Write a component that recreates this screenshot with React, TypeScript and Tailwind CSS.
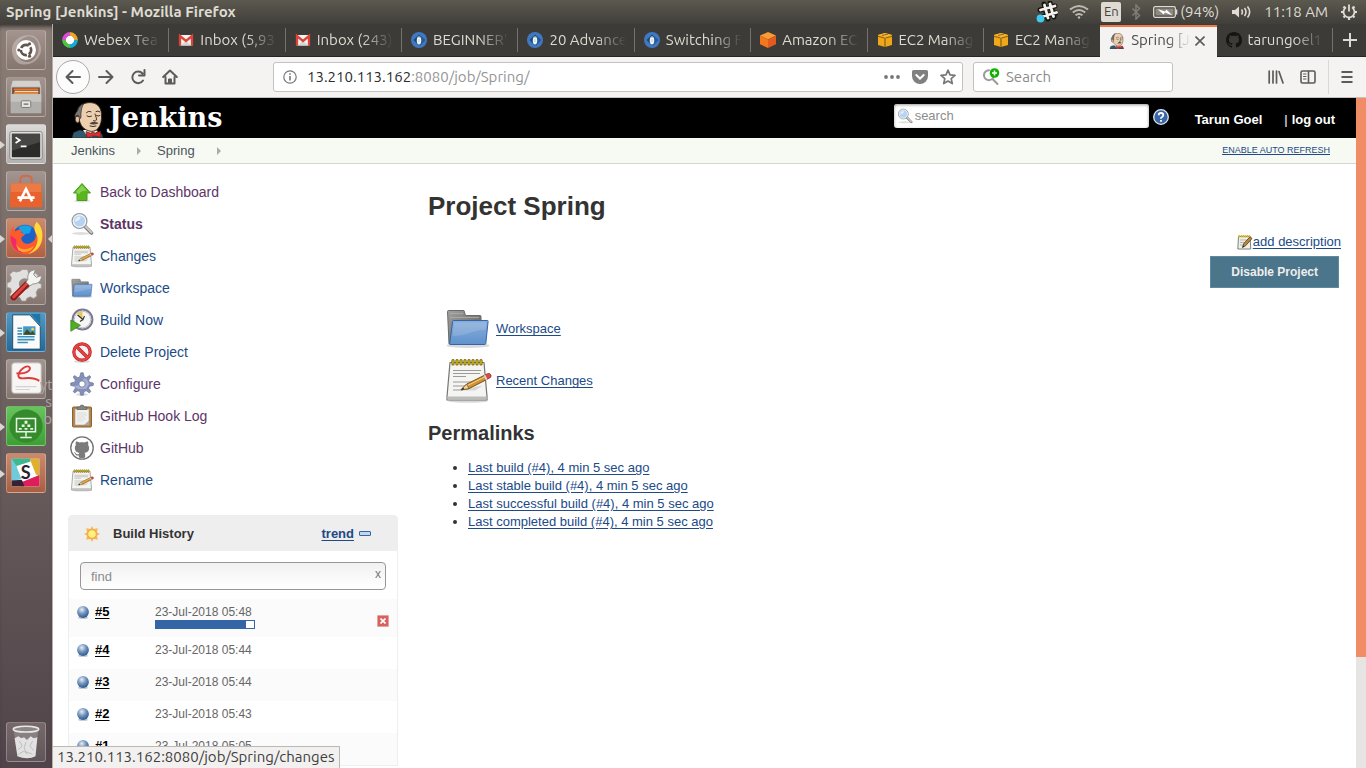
import type { ReactNode } from "react";

const UBUNTU = "font-['Ubuntu','Noto_Sans',sans-serif]";
const HELVETICA = "font-['Liberation_Sans',Arial,sans-serif]";

type SizeProps = { className?: string };

/* ---------- shared drawings ---------- */

function Butler({ className }: SizeProps) {
  return (
    <svg viewBox="0 0 34 36" className={className} aria-hidden="true">
      <path d="M1 36l1.500-5.500L9 28l7 2 10-1 5 3 1 4z" fill="#335a6c" stroke="#16262f" strokeWidth=".6" />
      <path d="M12 28l5 7h3l7-6-3-1z" fill="#f4f4f4" />
      <path d="M6 10C7 4 12 .8 18.500.6 26 .5 30 5 30.500 12c.4 6-.5 11-3.500 14.500-2 2.500-6 3.500-9 2.500-4.500-1.400-7.500-4-9-8.500z" fill="#eccfae" stroke="#33261d" strokeWidth=".9" />
      <path d="M6.500 9C7.500 5 10 2.500 13 1.500 10.500 4.500 10.500 8 10 11c-.2 2 .5 3.500-.5 5.500l-1.500-2.500C6 12.500 4.500 14 4.200 16 3 13.500 4.500 10.500 6.500 9z" fill="#7a7674" stroke="#221c19" strokeWidth=".6" />
      <path d="M4.500 15.500c1.200-2 3.800-1.400 4 1.300.2 2.200-.8 4.200-2 4-1.800-.3-2.800-3.300-2-5.300z" fill="#e3bf9b" stroke="#33261d" strokeWidth=".8" />
      <path d="M15.500 10.500q2-2 4.500-.8M25 9.500q2-1.200 3.800.3M16 14q2 1.600 4.500.2M25.500 13.500q1.800 1.200 3.500 0M24 12c.5 2.500 2.200 4.500 1.200 6.300-.7 1-2 .8-2.700.3M19 24q3 1.200 6 0" fill="none" stroke="#2a1e17" strokeWidth=".9" strokeLinecap="round" />
      <path d="M18.500 21.500c2-1.500 4-2.300 5.500-1.500 1 .3 2 0 3.500 1-1.200 1.700-6.500 2-9 .5z" fill="#4e433d" />
      <path d="M15 29.500l5.500 2v-1.200l2.800-.1.300 1.200 5.900-2.400.5 6.500-5.800-1.500-3.500.2-4.700 1.800z" fill="#d9302f" stroke="#5b100e" strokeWidth=".6" />
    </svg>
  );
}

function Notepad({ className }: SizeProps) {
  return (
    <svg viewBox="0 0 48 48" className={className} aria-hidden="true">
      <ellipse cx="24" cy="45" rx="20" ry="1.800" fill="#000" opacity=".15" />
      <path d="M6 6.500h34l3 34v3.500H3v-3.500z" fill="#f4f4f2" stroke="#747672" strokeWidth="1.200" strokeLinejoin="round" />
      <path d="M3.500 40.500h39v3h-39z" fill="#bcbdb9" />
      <path d="M9 14.500h28M9 17.500h27M9 20.500h13M9 26h24M9 30h16M9 34h10" stroke="#9a9c98" strokeWidth="1" />
      <path d="M9 4.500v3.500M13 4.500v3.500M17 4.500v3.500M21 4.500v3.500M25 4.500v3.500M29 4.500v3.500M33 4.500v3.500M37 4.500v3.500" stroke="#7b6500" strokeWidth="3.200" strokeLinecap="round" />
      <path d="M9 4.500v3.500M13 4.500v3.500M17 4.500v3.500M21 4.500v3.500M25 4.500v3.500M29 4.500v3.500M33 4.500v3.500M37 4.500v3.500" stroke="#e2cd33" strokeWidth="1.200" strokeLinecap="round" />
      <path d="M17 34.500h14l8-5-6 1z" fill="#000" opacity=".12" />
      <path d="M17 33.800l5.500-5.600L40 19.500l2.200 4.300L25 32.600z" fill="#cf9238" stroke="#7b4e0c" strokeWidth="1" strokeLinejoin="round" />
      <path d="M23.500 29.500L40.500 21" stroke="#efc978" strokeWidth="1.200" />
      <path d="M17 33.800l5.500-5.600 2.500 4.400z" fill="#ecd8ad" stroke="#7b4e0c" strokeWidth=".7" />
      <path d="M17 33.800l2.200-2.300 1 1.800z" fill="#222" />
      <path d="M41 18.900l2.500-1.200c2-.6 3 .2 3.400 1.300.4 1.400 0 2.400-1.200 3l-2.500 1.300z" fill="#dd4a45" stroke="#8c1815" strokeWidth=".7" />
      <path d="M39.500 19.700l1.800-.9 2.200 4.400-1.800.9z" fill="#d5d7d2" />
    </svg>
  );
}

function EditNote({ className }: SizeProps) {
  return (
    <svg viewBox="0 0 16 16" className={className} aria-hidden="true">
      <path d="M1.500 2.500h11.500l.8 12.500H.8z" fill="#efefed" stroke="#80827e" />
      <path d="M3 6h7M3 8.500h5M3 11h3" stroke="#b3b4b1" />
      <path d="M1.500 2.300h11.500" stroke="#d8bc22" strokeWidth="2.600" strokeDasharray="1.500 .6" />
      <path d="M5.500 13.500l1.200-3.800L13 2.800l2 1.700-6.200 7z" fill="#b98a3e" stroke="#54390f" strokeWidth=".8" strokeLinejoin="round" />
      <path d="M5.500 13.500l.6-1.900 1.200 1z" fill="#222" />
    </svg>
  );
}

function Folder({ className }: SizeProps) {
  return (
    <svg viewBox="0 0 48 48" className={className} aria-hidden="true">
      <defs>
        <linearGradient id="folder-back" x1="0" x2="1" y1="0" y2="1">
          <stop offset="0" stopColor="#a2a2a0" />
          <stop offset="1" stopColor="#555753" />
        </linearGradient>
        <linearGradient id="folder-front" x1="0" x2="0" y1="0" y2="1">
          <stop offset="0" stopColor="#8aaedb" />
          <stop offset="1" stopColor="#5f92cd" />
        </linearGradient>
      </defs>
      <ellipse cx="24" cy="41.500" rx="21.500" ry="2.500" fill="#000" opacity=".15" />
      <path d="M3.500 7.500Q3.500 6.500 4.500 6.500H20l1.500 5H36q1 0 1 1V40H5z" fill="url(#folder-back)" stroke="#6b6d6a" />
      <path d="M6 9.500h13M6 13.500h29" stroke="#aeaeac" strokeWidth=".8" />
      <path d="M9.500 16.500h34q.8 0 .6.900L41.800 39.500q-.1 1-1.100 1H6.500q-1 0-.8-1L8.600 17.400q.1-.9.900-.9z" fill="url(#folder-front)" stroke="#3465a4" />
      <path d="M10 18.500h32.500L41.500 26C30 25 23 32 8.500 32z" fill="#fff" opacity=".14" />
    </svg>
  );
}

function Magnifier({ className }: SizeProps) {
  return (
    <svg viewBox="0 0 24 24" className={className} aria-hidden="true">
      <ellipse cx="11" cy="21.500" rx="9" ry="1.500" fill="#000" opacity=".13" />
      <path d="M15 14.500l6.500 6.500" stroke="#7b7d7a" strokeWidth="3.600" strokeLinecap="round" />
      <path d="M15.500 14.500l6 6" stroke="#c9cac6" strokeWidth="2" strokeLinecap="round" />
      <circle cx="9.500" cy="9" r="7.400" fill="#b7d3f3" stroke="#9a9c99" strokeWidth="1.300" />
      <circle cx="9.500" cy="9" r="6.200" fill="none" stroke="#f2f5f8" strokeWidth="1.200" />
      <path d="M5 9.500C5 6.500 7 4.500 10.500 4.500c0 2.500-2 5-5.500 5z" fill="#fff" opacity=".65" />
    </svg>
  );
}

const OCTOCAT =
  "M8 0C3.580 0 0 3.580 0 8c0 3.540 2.290 6.530 5.470 7.590.4.070.550-.17.550-.38 0-.19-.010-.820-.010-1.490-2.010.370-2.530-.490-2.690-.940-.09-.230-.480-.940-.820-1.130-.280-.150-.680-.520-.010-.530.630-.010 1.080.580 1.230.820.720 1.210 1.870.870 2.330.660.070-.520.280-.870.510-1.070-1.780-.2-3.640-.890-3.640-3.950 0-.870.310-1.590.820-2.150-.080-.2-.360-1.020.080-2.120 0 0 .670-.210 2.200.820.640-.180 1.320-.270 2-.270s1.360.090 2 .270c1.530-1.040 2.200-.820 2.200-.820.440 1.100.160 1.920.080 2.120.510.560.820 1.270.820 2.150 0 3.070-1.870 3.750-3.650 3.950.290.250.540.730.540 1.480 0 1.070-.010 1.930-.010 2.200 0 .210.150.460.550.380A8.010 8.010 0 0016 8c0-4.420-3.580-8-8-8z";

/* ---------- system bar ---------- */

function SystemBar() {
  return (
    <header className={`flex h-6 shrink-0 items-center justify-between bg-linear-to-b from-[#5c594f] to-[#403f3a] pl-[6px] pr-2 text-[15px] text-[#dfdbd2] ${UBUNTU}`}>
      <h1 className="font-bold">Spring [Jenkins] - Mozilla Firefox</h1>
      <div className="flex items-center">
        <svg viewBox="0 0 22 22" className="mr-[11px] size-[22px]" aria-hidden="true">
          <path d="M8 3l4 15M14 2l4 14M4 9l15-4M6 16l14-4" stroke="#17170f" strokeWidth="5" strokeLinecap="round" />
          <path d="M8.500 4l3.500 13M14 3l3.500 12.500M4.500 9L19 5M6.500 15.500L20.500 11.500" stroke="#f2f1ee" strokeWidth="2.800" strokeLinecap="round" />
          <circle cx="4.500" cy="17.500" r="3.900" fill="#3fc8f0" />
        </svg>
        <svg viewBox="0 0 20 16" className="mr-3 h-4 w-5" fill="none" stroke="#bdbab2" strokeWidth="1.900" aria-hidden="true">
          <path d="M1 5.500Q10-1.500 19 5.500M3.800 8.500Q10 3.500 16.200 8.500M6.500 11.300Q10 8.500 13.500 11.300" />
          <circle cx="10" cy="13.500" r="1.200" fill="#bdbab2" stroke="none" />
        </svg>
        <span className="mr-[10px] flex h-5 w-5 items-center justify-center rounded-[2px] bg-[#dfdbd2] text-[13px] text-[#45443f]">En</span>
        <svg viewBox="0 0 10 16" className="mr-3 h-4 w-[10px]" fill="none" stroke="#7f7d76" strokeWidth="1.500" aria-hidden="true">
          <path d="M1.500 4.500l7 7L5 15V1l3.500 3.500-7 7" />
        </svg>
        <svg viewBox="0 0 25 12" className="mr-[2px] h-3 w-[25px]" aria-hidden="true">
          <rect x=".7" y=".7" width="21.600" height="10.600" rx="1.500" fill="none" stroke="#dfdbd2" strokeWidth="1.300" />
          <rect x="2.500" y="2.500" width="18" height="7" fill="#8d8a83" />
          <path d="M23.500 3.500v5" stroke="#dfdbd2" strokeWidth="1.600" />
          <path d="M4.500 3l7.500 2.500 1.500-2 6 6L12 6.500l-1.500 2z" fill="#fff" />
        </svg>
        <span className="mr-3">(94%)</span>
        <svg viewBox="0 0 21 14" className="mr-3 h-[14px] w-[21px]" fill="none" stroke="#dfdbd2" strokeWidth="1.600" aria-hidden="true">
          <path d="M1 5h3l4-3.500v11L4 9H1z" fill="#dfdbd2" stroke="none" />
          <path d="M10.500 4.500q1.800 2.500 0 5M13.500 3q3 4 0 8M16.500 1.500q4.300 5.500 0 11" />
        </svg>
        <time className="mr-3">11:18 AM</time>
        <svg viewBox="0 0 18 18" className="size-[18px]" fill="none" stroke="#dfdbd2" strokeWidth="1.800" aria-hidden="true">
          <path d="M6 4.300a5.500 5.500 0 1 0 6 0M9 1.500v7" />
          <path d="M3.500 3.500L5 5M14.500 3.500L13 5M1 9h2.500M14.500 9H17M3.500 14.500L5 13M14.500 14.500L13 13M9 14.500V17" strokeWidth="2.200" />
        </svg>
      </div>
    </header>
  );
}

/* ---------- launcher ---------- */

function Tile({ label, tone, running, focused, children }: { label: string; tone: string; running?: boolean; focused?: boolean; children: ReactNode }) {
  return (
    <button type="button" aria-label={label} className={`relative flex size-10 items-center justify-center rounded-[3px] border border-white/25 ${tone}`}>
      <svg viewBox="0 0 40 40" className="size-[38px]" aria-hidden="true">
        {children}
      </svg>
      {running && <span className="absolute -left-[7px] top-4 border-y-[4px] border-l-[5px] border-y-transparent border-l-[#d9d6d4]" />}
      {focused && <span className="absolute -right-[7px] top-4 border-y-[4px] border-r-[4px] border-y-transparent border-r-[#d9d6d4]" />}
    </button>
  );
}

function Launcher() {
  const glass = "bg-linear-to-b from-[#a3948f] to-[#85766f]";
  return (
    <nav aria-label="Launcher" className="relative flex w-[53px] shrink-0 flex-col items-start gap-[7px] border-r border-[#b5aeaa] bg-linear-to-b from-[#8b7e76] via-[#6d6160] to-[#50444a] pb-[6px] pl-[6px] pt-[6px] shadow-[inset_0_5px_5px_-3px_#2b2725]">
      <Tile label="Search your computer" tone={glass}>
        <path d="M6 25C2 10 16 2 27 5 16 5 9 13 10 22c1 8 8 12 15 10C17 39 8 34 6 25zM34 12c6 12-4 24-16 23 10-3 17-9 15-20-1-7-7-11-13-9 5-4 12 0 14 6z" fill="#cfc4bf" opacity=".55" />
        <circle cx="20" cy="20" r="10.500" fill="#fff" />
        <circle cx="20" cy="20" r="5.400" fill="none" stroke="#65544e" strokeWidth="2.800" strokeDasharray="9.300 2" strokeDashoffset="4" />
        <circle cx="12.500" cy="20" r="1.700" fill="#65544e" />
        <circle cx="23.700" cy="13.500" r="1.700" fill="#65544e" />
        <circle cx="23.700" cy="26.500" r="1.700" fill="#65544e" />
      </Tile>
      <Tile label="Files" tone={glass}>
        <path d="M6 3h28l2 7H4z" fill="#d3d1cd" />
        <path d="M4 9h32v28H4z" fill="#bdbbb7" />
        <path d="M5.500 10h29v7h-29z" fill="#66463a" />
        <path d="M7 11h26v2H7z" fill="#e9762f" />
        <path d="M8 13.500h25V15H8z" fill="#f6d8a8" />
        <path d="M7 15h26v2H7z" fill="#ec8a3a" />
        <path d="M4 17h32v20H4z" fill="#b1afab" />
        <path d="M4 17h32v8H4z" fill="#c6c4c0" />
        <rect x="15" y="24" width="10" height="7" rx="1" fill="#e8e7e4" stroke="#777570" />
        <path d="M17.500 27.500h5" stroke="#777570" strokeWidth="1.500" />
      </Tile>
      <Tile label="Terminal" tone="bg-linear-to-b from-[#dad9d7] to-[#b3b1af]" running>
        <rect x="3" y="7" width="34" height="29" rx="2" fill="#efefed" stroke="#7c7b78" />
        <rect x="5" y="9" width="30" height="25" fill="#2b2c2a" />
        <path d="M5 9h30v9L5 27z" fill="#fff" opacity=".13" />
        <path d="M9 13l4.500 3L9 19M14.500 22.500h6" fill="none" stroke="#fff" strokeWidth="1.800" />
      </Tile>
      <Tile label="Ubuntu Software" tone={glass}>
        <path d="M14 16V8q0-4 6-4t6 4v8" fill="none" stroke="#d2694b" strokeWidth="2" />
        <path d="M4 12h32l1 25H3z" fill="#e9612d" />
        <path d="M4 12h32v9H4z" fill="#f08a55" opacity=".6" />
        <path d="M13.500 31l6.500-13 6.500 13M11 27h18" fill="none" stroke="#fff" strokeWidth="2.800" />
      </Tile>
      <Tile label="Firefox" tone="bg-linear-to-b from-[#c98b70] to-[#b16040]" running focused>
        <circle cx="19" cy="19" r="13" fill="#1b63c6" />
        <path d="M12 9q7-5 14 0l-2 6-7 1z" fill="#16a3e8" />
        <path d="M7 8c0 3 1 4 2 5 2-2 5-2 6-2-1 3 0 4 4 5-1 2-4 2-4 5 1 5 7 7 12 3 4-3 4-8 2-12 3 2 5 7 3 13 3-4 4-10 1-15-2-3-3-5-3-7 5 3 8 9 7.500 17C37 30 30 37 20 37S3 30 3 20c0-4 1-9 4-12z" fill="#ff5a2b" />
        <path d="M31 3c6 5 7 12 6 18-1 8-7 14-15 16 7-4 11-10 10-18-1-5-6-8-1-16z" fill="#ffd93c" />
        <path d="M4 17c-1 8 3 17 13 19-6-4-8-9-7-14z" fill="#f0286e" />
        <path d="M9 26c4 7 13 8 19 2-1 6-10 9-16 5z" fill="#ffa52e" />
      </Tile>
      <Tile label="System Settings" tone={glass}>
        <path d="M17 4h6l1 4 4 2 4-2 4 4-2 4 2 4 3 1v5l-4 1-2 4 1 4-4 3-4-2-4 2-1 3h-5l-2-4-4-1-4 2-4-4 2-4-1-4-4-1v-5l4-2 1-4-2-4 4-4 4 1 4-1z" transform="translate(1 0) scale(.9)" fill="#e1e0de" stroke="#9b9997" />
        <circle cx="18.500" cy="19" r="6" fill="#918783" />
        <path d="M7 33L21 19" stroke="#8e1a1a" strokeWidth="6.400" strokeLinecap="round" />
        <path d="M7 32.500L21 18.500" stroke="#dd4640" strokeWidth="3" strokeLinecap="round" />
        <path d="M22 14c-1-5 2-10 8-10l-2 5 3 3 5-2c1 5-3 9-9 9l-3 2-4-4z" fill="#f4f4f3" stroke="#8d8b89" />
      </Tile>
      <Tile label="LibreOffice Writer" tone="bg-linear-to-b from-[#5499c2] to-[#246a98]" running>
        <path d="M6 2h18l11 12v24H6z" fill="#fbfbfb" stroke="#1e4f70" />
        <path d="M25 1h10v11z" fill="#1c76aa" />
        <path d="M11 16h5M11 19h5M11 22h5M11 25h18M11 28h18M11 31h11" stroke="#3c91bd" strokeWidth="1.700" />
        <rect x="17" y="14" width="13" height="9" fill="#4a9ac4" />
        <path d="M17 23l4-6 4 4 2-2 3 4z" fill="#384f24" />
        <circle cx="27" cy="17" r="1.500" fill="#f3d14a" />
      </Tile>
      <Tile label="Document Viewer" tone={glass}>
        <rect x="5" y="3" width="31" height="32" rx="3" fill="#f7f6f5" stroke="#bbb" />
        <path d="M10 14c9 1 15-2 14-6-2-4-12 2-12 9 1 6 12-2 22 5" fill="none" stroke="#dd3a3a" strokeWidth="2" />
        <path d="M9 28h22M9 31h15" stroke="#d4d3d2" strokeWidth="1.200" />
      </Tile>
      <Tile label="Remote Desktop" tone="bg-linear-to-b from-[#68c35d] to-[#3e9f35]" running>
        <circle cx="20" cy="20" r="17.500" fill="#338b2c" />
        <path d="M10 12h20v14H10zM20 26v5M14 32h12" fill="none" stroke="#e9f6e8" strokeWidth="1.600" />
        <path d="M18.500 14.500h3v3h-3zM15.500 18.500h3v2.500h-3zM21.500 18.500h3v2.500h-3zM12.500 22h3v2h-3zM18.500 22h3v2h-3zM24.500 22h3v2h-3z" fill="#e9f6e8" />
      </Tile>
      <Tile label="Slack" tone="bg-linear-to-b from-[#c98b70] to-[#a85f42]" running>
        <path d="M5 5h29v29H5z" fill="#fff" />
        <path d="M5 5h20L11 12 5 25z" fill="#3eb890" />
        <path d="M24 5h10v18l-5-2z" fill="#e0b02c" />
        <path d="M5 5l8 7-2 3 5 11-11 3z" fill="#6fcadc" />
        <path d="M5 5h19l1 4-14 5z" fill="#3eb890" />
        <path d="M34 22v12H15l2-5z" fill="#df1d5a" />
        <path d="M5 28l11-1 2 7H5z" fill="#372139" />
        <path d="M10 12.500l15-4.500 6 15-15 5.500z" fill="#fff" />
        <text x="14.500" y="26" fontSize="19" fontWeight="700" fontFamily="Lato, sans-serif" fill="#2b2030">S</text>
      </Tile>
      <div className="flex-1" />
      <Tile label="Trash" tone="bg-linear-to-b from-[#77696a] to-[#60565a]">
        <path d="M7 8l4 27q9 4 18 0l4-27z" fill="#a7a3a4" opacity=".45" />
        <path d="M8 16l4-2 3 2 3-1 3 3 4-4 3 2 4-1-2 20q-8 4-19 0z" fill="#e3e2e2" />
        <path d="M13 19l3 5-4 4M20 20l-2 6 3 7M27 19l-3 5 4 5M12 33l5-3 5 1 5 2" fill="none" stroke="#bdbabc" strokeWidth="1" />
        <ellipse cx="20" cy="6.500" rx="13.500" ry="3" fill="#8b8688" stroke="#e9e7e7" strokeWidth="1.600" />
      </Tile>
      <div aria-hidden="true" className="absolute right-0 top-[352px] w-3 text-right text-sm leading-[17px] text-[#aaa3a1] font-['Noto_Sans',sans-serif]">
        yt
        <br />s<br />o
      </div>
    </nav>
  );
}

/* ---------- browser chrome ---------- */

function WebexIcon() {
  return (
    <svg viewBox="0 0 16 16" className="size-4 shrink-0" fill="none" strokeWidth="3.400" aria-hidden="true">
      <circle cx="8" cy="8" r="6" fill="#fff" stroke="#15b6a0" />
      <path d="M2 8a6 6 0 0 1 6-6" stroke="#e645d6" />
      <path d="M8 2a6 6 0 0 1 6 6" stroke="#f9a11b" />
      <path d="M14 8a6 6 0 0 1-6 6" stroke="#16a7dd" />
      <path d="M8 14a6 6 0 0 1-6-6" stroke="#54c13c" />
    </svg>
  );
}

function GmailIcon() {
  return (
    <svg viewBox="0 0 16 16" className="size-4 shrink-0" aria-hidden="true">
      <path d="M1.500 3h13v10.500h-13z" fill="#f3f2f0" />
      <path d="M3 13.500l5-5 5 5z" fill="#d9d6d3" />
      <path d="M2 13.500V4l6 5 6-5v9.500" fill="none" stroke="#db4437" strokeWidth="2.300" />
    </svg>
  );
}

function TutorialIcon() {
  return (
    <svg viewBox="0 0 16 16" className="size-4 shrink-0" aria-hidden="true">
      <circle cx="8" cy="8" r="8" fill="#4079c3" />
      <path d="M8 2.500L13.500 8 8 13.500 2.500 8z" fill="#1f4678" />
      <path d="M10 4l4.500 4L9 14z" fill="#285a99" />
      <ellipse cx="8" cy="8.500" rx="2.200" ry="3.900" fill="#f0f6f7" />
      <path d="M6 5.500q2-2.500 4 0z" fill="#7ca7b7" />
      <path d="M8 7v3" stroke="#9ccabb" strokeWidth=".8" />
    </svg>
  );
}

function AmazonIcon() {
  return (
    <svg viewBox="0 0 16 16" className="size-4 shrink-0" aria-hidden="true">
      <path d="M8 0l8 3.500L8 7.500 0 3.500z" fill="#fb9b36" />
      <path d="M0 3.500l8 4V16l-8-3.800z" fill="#f4761f" />
      <path d="M16 3.500l-8 4V16l8-3.800z" fill="#e35c1f" />
    </svg>
  );
}

function Ec2Icon() {
  return (
    <svg viewBox="0 0 16 16" className="size-4 shrink-0" aria-hidden="true">
      <path d="M1 3l7-2 7 2v10l-7 2-7-2z" fill="#f0a818" />
      <path d="M1 3l7-2 7 2-7 2z" fill="#f7b733" />
      <path d="M1 4.300L7.500 6v9M15 4.300L8.500 6v9M5 3.500l6-1.500" fill="none" stroke="#6d4b0f" strokeWidth=".8" />
      <path d="M8 6v9" stroke="#fac53f" strokeWidth=".6" />
    </svg>
  );
}

const tabs: { title: string; icon: ReactNode; active?: boolean }[] = [
  { title: "Webex Tea", icon: <WebexIcon /> },
  { title: "Inbox (5,93", icon: <GmailIcon /> },
  { title: "Inbox (243)", icon: <GmailIcon /> },
  { title: "BEGINNER'", icon: <TutorialIcon /> },
  { title: "20 Advance", icon: <TutorialIcon /> },
  { title: "Switching F", icon: <TutorialIcon /> },
  { title: "Amazon EC", icon: <AmazonIcon /> },
  { title: "EC2 Manag", icon: <Ec2Icon /> },
  { title: "EC2 Manag", icon: <Ec2Icon /> },
  { title: "Spring [J", icon: <Butler className="size-4 shrink-0" />, active: true },
  {
    title: "tarungoel1",
    icon: (
      <svg viewBox="0 0 16 16" className="size-4 shrink-0" aria-hidden="true">
        <path d={OCTOCAT} fill="#161514" />
      </svg>
    ),
  },
];

function TabStrip() {
  return (
    <div className={`flex h-[33px] shrink-0 items-stretch border-b border-[#262523] bg-[#3d3b37] text-[15px] text-[#dfdbd2] ${UBUNTU}`}>
      <div role="tablist" className="flex min-w-0 flex-1">
        {tabs.map((tab, i) => (
          <div
            key={i}
            role="presentation"
            className={
              tab.active
                ? "-mb-px mt-px flex min-w-0 flex-1 items-center border-t-2 border-[#ee7947] bg-[#f4f3f2] pb-[3px] text-[#4c4a48]"
                : "flex min-w-0 flex-1 items-center"
            }
          >
            <button type="button" role="tab" aria-selected={!!tab.active} className="flex min-w-0 flex-1 items-center gap-[6px] pl-[9px]">
              {tab.icon}
              <span className="min-w-0 flex-1 overflow-hidden whitespace-nowrap text-left [mask-image:linear-gradient(to_right,black_60%,transparent)]">{tab.title}</span>
            </button>
            {tab.active ? (
              <button type="button" aria-label="Close tab" className="ml-1 mr-3">
                <svg viewBox="0 0 10 10" className="size-[10px]" stroke="#5c5b59" strokeWidth="1.600" aria-hidden="true">
                  <path d="M.5.5l9 9M9.500.5l-9 9" />
                </svg>
              </button>
            ) : (
              <span className={`ml-2 h-6 w-px ${i === 8 ? "bg-transparent" : "bg-[#74726d]"}`} />
            )}
          </div>
        ))}
      </div>
      <button type="button" aria-label="New tab" className="flex w-[33px] items-center justify-center">
        <svg viewBox="0 0 14 14" className="size-[14px]" stroke="#dfdbd2" strokeWidth="2" aria-hidden="true">
          <path d="M7 0v14M0 7h14" />
        </svg>
      </button>
    </div>
  );
}

function ToolButton({ label, children, className = "" }: { label: string; children: ReactNode; className?: string }) {
  return (
    <button type="button" aria-label={label} className={`flex shrink-0 items-center justify-center ${className}`}>
      <svg viewBox="0 0 16 16" className="size-4" fill="none" stroke="#5b5b5a" strokeWidth="2" strokeLinecap="round" strokeLinejoin="round" aria-hidden="true">
        {children}
      </svg>
    </button>
  );
}

function Toolbar() {
  return (
    <div className={`flex h-[41px] shrink-0 items-center border-b border-[#c5c3c0] bg-[#f4f3f2] pl-[3px] text-[15px] ${UBUNTU}`}>
      <ToolButton label="Back" className="size-[34px] rounded-full border border-[#a9a8a6] bg-[#fcfcfc]">
        <path d="M15 8H1.500M7.500 2L1.500 8l6 6" />
      </ToolButton>
      <ToolButton label="Forward" className="w-8">
        <path d="M1 8h13.500M8.500 2l6 6-6 6" />
      </ToolButton>
      <ToolButton label="Reload" className="w-8">
        <path d="M13 11.500A5.800 5.800 0 1 1 12.500 4.500M14.500 1v5.500H9" />
      </ToolButton>
      <ToolButton label="Home" className="w-8">
        <path d="M1.200 8L8 1.500 14.800 8M3.500 8v6.500h9V8M7 14.500v-4h2v4" />
      </ToolButton>
      <div className="ml-[87px] flex h-[30px] min-w-0 flex-1 items-center rounded-[3px] border border-[#c4c2bf] bg-white px-[9px]">
        <svg viewBox="0 0 14 14" className="mr-[10px] size-[14px] shrink-0" fill="none" stroke="#777" strokeWidth="1.200" aria-hidden="true">
          <circle cx="7" cy="7" r="6.200" />
          <path d="M7 6v4.500M7 3.300v1.500" strokeWidth="1.600" />
        </svg>
        <label htmlFor="address" className="text-[#2c2c2c]">13.210.113.162</label>
        <input id="address" aria-label="Address" defaultValue=":8080/job/Spring/" className="min-w-0 flex-1 bg-transparent text-[#959595] outline-none" />
        <button type="button" aria-label="Page actions" className="mr-3">
          <svg viewBox="0 0 16 4" className="h-1 w-4" fill="#777" aria-hidden="true">
            <circle cx="2" cy="2" r="1.900" />
            <circle cx="8" cy="2" r="1.900" />
            <circle cx="14" cy="2" r="1.900" />
          </svg>
        </button>
        <button type="button" aria-label="Save to Pocket" className="mr-3">
          <svg viewBox="0 0 16 16" className="size-4" aria-hidden="true">
            <path d="M1.500 1h13Q16 1 16 2.500V7a8 8 0 0 1-16 0V2.500Q0 1 1.500 1z" fill="#808080" />
            <path d="M4.300 6L8 9.500 11.700 6" fill="none" stroke="#fff" strokeWidth="2" strokeLinecap="round" />
          </svg>
        </button>
        <button type="button" aria-label="Bookmark this page" className="-mr-[3px]">
          <svg viewBox="0 0 16 16" className="size-4" fill="none" stroke="#777" strokeWidth="1.700" strokeLinejoin="round" aria-hidden="true">
            <path d="M8 1.200l2 4.600 5 .5-3.800 3.300 1.100 5L8 12l-4.300 2.600 1.100-5L1 6.300l5-.5z" />
          </svg>
        </button>
      </div>
      <div className="ml-[10px] flex h-[30px] w-[200px] shrink-0 items-center gap-[6px] rounded-[3px] border border-[#c4c2bf] bg-white pl-2">
        <svg viewBox="0 0 18 18" className="size-[18px] shrink-0" fill="none" aria-hidden="true">
          <path d="M7 2.200a5 5 0 1 0 4.200 7.600M10.500 11l5 5" stroke="#9a9a99" strokeWidth="2" strokeLinecap="round" />
          <circle cx="12.500" cy="5" r="4.800" fill="#12b100" />
          <path d="M12.500 2.500v5M10 5h5" stroke="#fff" strokeWidth="1.500" />
        </svg>
        <input aria-label="Web search" placeholder="Search" className="w-full min-w-0 bg-transparent outline-none placeholder:text-[#8b8b8a]" />
      </div>
      <div className="ml-[95px] flex h-9 items-center">
        <ToolButton label="Library" className="mr-4">
          <path d="M1.200 2v12M5 2v12M8.500 2v12M11 2.500l4 11.500" strokeWidth="1.700" />
        </ToolButton>
        <ToolButton label="Sidebars" className="mr-3">
          <path d="M2.500 2h11Q15 2 15 3.500v9q0 1.500-1.500 1.500h-11Q1 14 1 12.500v-9Q1 2 2.500 2zM8.500 2v12" strokeWidth="1.600" />
          <path d="M3.500 5h2.500M3.500 7.500h2.500M3.500 10h2.500" strokeWidth="1.100" />
        </ToolButton>
        <span className="h-[34px] w-px bg-[#dad8d5]" />
        <ToolButton label="Menu" className="ml-[10px] mr-[11px]">
          <path d="M2.500 3h11M2.500 8h11M2.500 13h11" strokeLinecap="butt" />
        </ToolButton>
      </div>
    </div>
  );
}

/* ---------- Jenkins ---------- */

function JenkinsHeader() {
  return (
    <header className="flex h-10 shrink-0 items-center bg-black pl-[18px] pr-[21px] text-white">
      <a href="#home" className="flex h-full flex-1 items-end gap-1">
        <Butler className="h-9 w-[34px]" />
        <span className="pb-1 text-[27px] font-bold leading-8 font-['DejaVu_Serif',serif]">Jenkins</span>
      </a>
      <div className="mb-1 flex h-6 w-[255px] items-center rounded-[3px] bg-white pl-[3px] shadow-[inset_0_1px_3px_#999]">
        <Magnifier className="size-4 shrink-0" />
        <input aria-label="Search Jenkins" placeholder="search" className="w-full min-w-0 bg-transparent pl-[2px] text-[13px] outline-none placeholder:text-[#8c8c8c]" />
      </div>
      <a href="#help" aria-label="Help" className="mb-[2px] ml-1">
        <svg viewBox="0 0 16 16" className="size-4" aria-hidden="true">
          <circle cx="8" cy="8" r="7.300" fill="#3b67a8" stroke="#dfe7f1" strokeWidth="1.300" />
          <path d="M5.700 6.300Q5.700 4 8 4t2.300 2Q10.300 7.300 9 8 8 8.500 8 9.700M8 11v1.800" fill="none" stroke="#fff" strokeWidth="1.800" />
        </svg>
      </a>
      <div className="flex items-center pt-1 text-[13px] font-bold">
        <a href="#user" className="ml-[26px]">Tarun Goel</a>
        <span className="ml-[22px] mr-1 font-normal">|</span>
        <a href="#logout">log out</a>
      </div>
    </header>
  );
}

function Crumb({ children }: { children: string }) {
  return (
    <li className="flex items-center">
      <a href="#crumb" className="mr-[22px]">{children}</a>
      <span className="mr-4 border-y-[4px] border-l-[4px] border-y-transparent border-l-[#aaa]" />
    </li>
  );
}

function Breadcrumbs() {
  return (
    <nav aria-label="Breadcrumbs" className="flex h-[26px] shrink-0 items-center justify-between border-b border-[#d3d7cf] bg-[#f6faf2] pl-[18px] pr-[26px] pt-px text-[13px] text-[#4d545d]">
      <ul className="flex">
        <Crumb>Jenkins</Crumb>
        <Crumb>Spring</Crumb>
      </ul>
      <a href="#refresh" className="text-[9px] uppercase text-[#204a87] underline">Enable auto refresh</a>
    </nav>
  );
}

const taskIcon = "size-6 shrink-0";

const tasks: { label: string; visited?: boolean; current?: boolean; icon: ReactNode }[] = [
  {
    label: "Back to Dashboard",
    visited: true,
    icon: (
      <svg viewBox="0 0 24 24" className={taskIcon} aria-hidden="true">
        <ellipse cx="12" cy="21" rx="8" ry="1.500" fill="#000" opacity=".12" />
        <path d="M12 3.500l8.500 9.500H17v7.500H7V13H3.500z" fill="#5bb61d" stroke="#4a9c1c" strokeLinejoin="round" />
        <path d="M12 5.200l5 5.800q-6-1-8 3.500L5.800 12z" fill="#a5e27a" opacity=".6" />
      </svg>
    ),
  },
  { label: "Status", visited: true, current: true, icon: <Magnifier className={taskIcon} /> },
  { label: "Changes", icon: <Notepad className={taskIcon} /> },
  { label: "Workspace", icon: <Folder className={taskIcon} /> },
  {
    label: "Build Now",
    icon: (
      <svg viewBox="0 0 24 24" className={taskIcon} aria-hidden="true">
        <circle cx="12.500" cy="11.500" r="9.900" fill="#f5f5f3" stroke="#7c7a92" strokeWidth="2" />
        <circle cx="12.500" cy="11.500" r="8.200" fill="none" stroke="#c3c2c8" />
        <path d="M12.500 11.500L7 5Q10 3 12.500 4z" fill="#e9c955" />
        <path d="M7.500 7l5.500 4.500 1.500-3.500M13 11.500L10 13.500" fill="none" stroke="#333" strokeWidth="1.100" />
        <path d="M.8 12l9.700 5.300-9.700 6z" fill="#4fae21" stroke="#37800f" strokeWidth=".7" />
      </svg>
    ),
  },
  {
    label: "Delete Project",
    icon: (
      <svg viewBox="0 0 24 24" className={taskIcon} aria-hidden="true">
        <ellipse cx="12" cy="21.500" rx="8" ry="1.500" fill="#000" opacity=".15" />
        <circle cx="12" cy="12" r="8.200" fill="#f4f2f2" stroke="#c02020" strokeWidth="3.200" />
        <path d="M6.500 6.500l11 11" stroke="#c51c1c" strokeWidth="3.400" />
        <circle cx="12" cy="12" r="8.200" fill="none" stroke="#e24444" strokeWidth="2" />
        <path d="M6.500 6.500l11 11" stroke="#e24444" strokeWidth="2.200" />
      </svg>
    ),
  },
  {
    label: "Configure",
    visited: true,
    icon: (
      <svg viewBox="0 0 24 24" className={taskIcon} aria-hidden="true">
        <ellipse cx="12" cy="22.500" rx="6" ry="1.300" fill="#000" opacity=".15" />
        <path d="M10.800.8h2.400l1 4 2 .9L19.500 3.600 20.800 5l-2.200 3.200.8 2 3.900.8v2.400l-3.900.9-.8 1.900 2.200 3.300-1.500 1.400-3.100-2.200-2 .8-1 3.700h-2.400l-1-3.700-2-.8-3.100 2.200-1.500-1.400 2.200-3.300-.8-1.900-3.900-.9V11l3.900-.8.8-2L3.200 5l1.300-1.400 3.300 2.100 2-.9z" fill="#8490ba" stroke="#6a759c" strokeWidth=".7" strokeLinejoin="round" />
        <path d="M3 14Q11 15 14 6l3 1.500 2 4.500-3 5H8z" fill="#c4cae3" opacity=".55" />
        <circle cx="12" cy="12" r="3.200" fill="#fff" stroke="#667096" strokeWidth=".8" />
      </svg>
    ),
  },
  {
    label: "GitHub Hook Log",
    visited: true,
    icon: (
      <svg viewBox="0 0 24 24" className={taskIcon} aria-hidden="true">
        <rect x="2.500" y="3" width="19" height="20" rx="1" fill="#b58345" stroke="#8c6430" />
        <path d="M5 5h14v16H5z" fill="#f1f1f0" stroke="#a3a3a0" strokeWidth=".6" />
        <path d="M14 21l5-4.500V21z" fill="#aaaaa8" />
        <path d="M7 9h9M7 11h10M7 13h8M7 15h9M7 17h6" stroke="#d9d9d7" strokeWidth=".8" />
        <path d="M7 5.500V3h3q0-2 2-2t2 2h3v2.500z" fill="#85877f" stroke="#5c5e58" strokeWidth=".7" />
      </svg>
    ),
  },
  {
    label: "GitHub",
    visited: true,
    icon: (
      <svg viewBox="0 0 24 24" className={taskIcon} aria-hidden="true">
        <circle cx="12" cy="12" r="11.200" fill="#fff" stroke="#6f6f6f" strokeWidth="1.300" />
        <g transform="translate(1.800 2) scale(1.275)">
          <path d="M5.470 15.300v-1.600c-2.010.370-2.530-.490-2.690-.940-.09-.230-.480-.940-.820-1.130-.280-.150-.680-.520-.010-.530.630-.010 1.080.580 1.230.820.720 1.210 1.870.870 2.330.660.070-.520.280-.870.510-1.070-1.780-.2-3.640-.890-3.640-3.950 0-.870.310-1.590.820-2.150-.080-.2-.360-1.620.080-2.620 0 0 1.170-.210 2.700.820.640-.180 1.320-.270 2-.270s1.360.090 2 .270c1.530-1.040 2.700-.820 2.700-.820.440 1 .160 2.420.080 2.620.510.560.820 1.270.820 2.150 0 3.070-1.870 3.750-3.650 3.950.290.250.540.730.540 1.480v2.360q-2.500.900-5 0z" fill="#7b7b7b" />
        </g>
      </svg>
    ),
  },
  { label: "Rename", icon: <Notepad className={taskIcon} /> },
];

const builds = [
  { id: "#5", time: "23-Jul-2018 05:48", progress: 92 },
  { id: "#4", time: "23-Jul-2018 05:44" },
  { id: "#3", time: "23-Jul-2018 05:44" },
  { id: "#2", time: "23-Jul-2018 05:43" },
  { id: "#1", time: "23-Jul-2018 05:05" },
];

function BuildHistory() {
  return (
    <section className="mt-[19px] rounded-t-[4px] border border-[#eee] text-xs text-[#666]">
      <div className="flex h-[35px] items-center bg-[#eee] pl-[15px] pr-[26px] text-[13px] font-bold text-[#333]">
        <svg viewBox="0 0 16 16" className="mr-[13px] size-4" aria-hidden="true">
          <path d="M8 0l1.500 3L13.700 2.300 13 6.500 16 8l-3 1.500.7 4.200L9.500 13 8 16l-1.500-3-4.200.7L3 9.500 0 8l3-1.500-.7-4.200L6.500 3z" fill="#f8b457" />
          <circle cx="8" cy="8" r="4.300" fill="#fdf07c" stroke="#efa53c" />
        </svg>
        <h2 className="flex-1">Build History</h2>
        <a href="#trend" className="text-[#204a87] underline underline-offset-2">trend</a>
        <button type="button" aria-label="Collapse" className="ml-[5px] h-[5px] w-3 rounded-[1px] border border-[#3465a4] bg-[#c3d6ec]" />
      </div>
      <div className="mx-[11px] mb-[9px] mt-[11px] flex h-7 items-center rounded-[4px] border border-[#979797] bg-linear-to-b from-[#f1f1f1] to-white pl-[10px] pr-1">
        <input aria-label="Find build" placeholder="find" className="w-full min-w-0 bg-transparent pt-px text-[13px] outline-none placeholder:text-[#8c8c8c]" />
        <button type="button" aria-label="Clear" className="pb-1 text-[#777]">x</button>
      </div>
      <table className="w-full">
        <tbody>
          {builds.map((b) => (
            <tr key={b.id} className="h-8 align-top odd:bg-[#fbfbfb]">
              <td className="w-[86px] pl-2 pt-[5px]">
                <span className="flex items-center gap-[6px]">
                  <svg viewBox="0 0 12 13" className="h-[13px] w-3" aria-label="Success" role="img">
                    <defs>
                      <radialGradient id={`ball-${b.id.slice(1)}`} cx=".4" cy=".3" r=".7">
                        <stop offset="0" stopColor="#e9eef2" />
                        <stop offset=".5" stopColor="#7497c0" />
                        <stop offset="1" stopColor="#2d5995" />
                      </radialGradient>
                    </defs>
                    <ellipse cx="6" cy="11.800" rx="5" ry="1.200" fill="#000" opacity=".2" />
                    <circle cx="6" cy="6" r="5.900" fill={`url(#ball-${b.id.slice(1)})`} />
                  </svg>
                  <a href="#build" className="text-[13px] font-bold leading-4 text-black underline underline-offset-2">{b.id}</a>
                </span>
              </td>
              <td className="pb-2 pt-[5px]">
                <span className="block leading-4">{b.time}</span>
                {b.progress && (
                  <div role="progressbar" aria-label="Build progress" aria-valuenow={b.progress} className="h-[9px] w-[100px] border border-[#3465a4] bg-white">
                    <div className="h-full bg-[#3465a4]" style={{ width: `${b.progress}%` }} />
                  </div>
                )}
              </td>
              <td className="w-5 pt-4">
                {b.progress && (
                  <button type="button" aria-label="Cancel build" className="flex size-3 items-center justify-center rounded-[1px] border border-[#e0a5a3] bg-[#d9625f]">
                    <svg viewBox="0 0 6 6" className="size-[6px]" stroke="#fff" strokeWidth="1.600" aria-hidden="true">
                      <path d="M.5.5l5 5M5.500.5l-5 5" />
                    </svg>
                  </button>
                )}
              </td>
            </tr>
          ))}
        </tbody>
      </table>
    </section>
  );
}

const permalinks = [
  "Last build (#4), 4 min 5 sec ago",
  "Last stable build (#4), 4 min 5 sec ago",
  "Last successful build (#4), 4 min 5 sec ago",
  "Last completed build (#4), 4 min 5 sec ago",
];

const link = "text-[#204a87] underline underline-offset-2";

function Project() {
  return (
    <main className="min-w-0 flex-1 pl-[30px] pr-[15px] pt-[26px] text-[13px] text-[#333]">
      <h1 className="text-[26px] font-bold leading-8">Project Spring</h1>
      <div className="mt-3 flex flex-col items-end">
        <a href="#describe" className="flex items-center leading-4">
          <EditNote className="size-4" />
          <span className={link}>add description</span>
        </a>
        <button type="button" className="mr-[2px] mt-[6px] h-8 border border-[#5b8ba0] bg-[#4b758b] px-5 text-xs font-bold text-[#eee]">Disable Project</button>
      </div>
      <div className="ml-4 mt-4 flex flex-col gap-1">
        <a href="#workspace" className="flex items-center gap-1">
          <Folder className="size-12" />
          <span className={`pt-[2px] ${link}`}>Workspace</span>
        </a>
        <a href="#changes" className="flex items-center gap-1">
          <Notepad className="size-12" />
          <span className={`pt-[2px] ${link}`}>Recent Changes</span>
        </a>
      </div>
      <h2 className="mt-[17px] text-xl font-bold leading-6">Permalinks</h2>
      <ul className="mt-[14px] list-disc pl-10 leading-[18px]">
        {permalinks.map((p) => (
          <li key={p}>
            <a href="#permalink" className={link}>{p}</a>
          </li>
        ))}
      </ul>
    </main>
  );
}

export default function App() {
  return (
    <div className="flex h-screen flex-col overflow-hidden bg-white">
      <SystemBar />
      <div className="flex min-h-0 flex-1">
        <Launcher />
        <div className="flex min-w-0 flex-1 flex-col">
          <TabStrip />
          <Toolbar />
          <div className={`relative flex min-h-0 flex-1 ${HELVETICA}`}>
            <div className="flex min-w-0 flex-1 flex-col overflow-hidden bg-white">
              <JenkinsHeader />
              <Breadcrumbs />
              <div className="flex min-h-0 flex-1">
                <aside className="w-[345px] shrink-0 pl-[15px] pt-3">
                  <ul>
                    {tasks.map((t) => (
                      <li key={t.label}>
                        <a href="#task" className={`flex h-8 items-center gap-[6px] pl-[2px] text-sm ${t.visited ? "text-[#5c3566]" : "text-[#204a87]"} ${t.current ? "font-bold" : ""}`}>
                          {t.icon}
                          {t.label}
                        </a>
                      </li>
                    ))}
                  </ul>
                  <BuildHistory />
                </aside>
                <Project />
              </div>
            </div>
            <div aria-hidden="true" className="w-[10px] shrink-0 bg-[#e6e5e4]">
              <div className="h-[83.5%] bg-[#f08d66]" />
            </div>
            <div className={`absolute bottom-0 left-0 flex h-[22px] items-center border-r border-t border-[#bab8b5] bg-[#f2f1f0] px-1 text-[15px] text-[#3f3f3e] ${UBUNTU}`}>
              13.210.113.162:8080/job/Spring/changes
            </div>
          </div>
        </div>
      </div>
    </div>
  );
}
